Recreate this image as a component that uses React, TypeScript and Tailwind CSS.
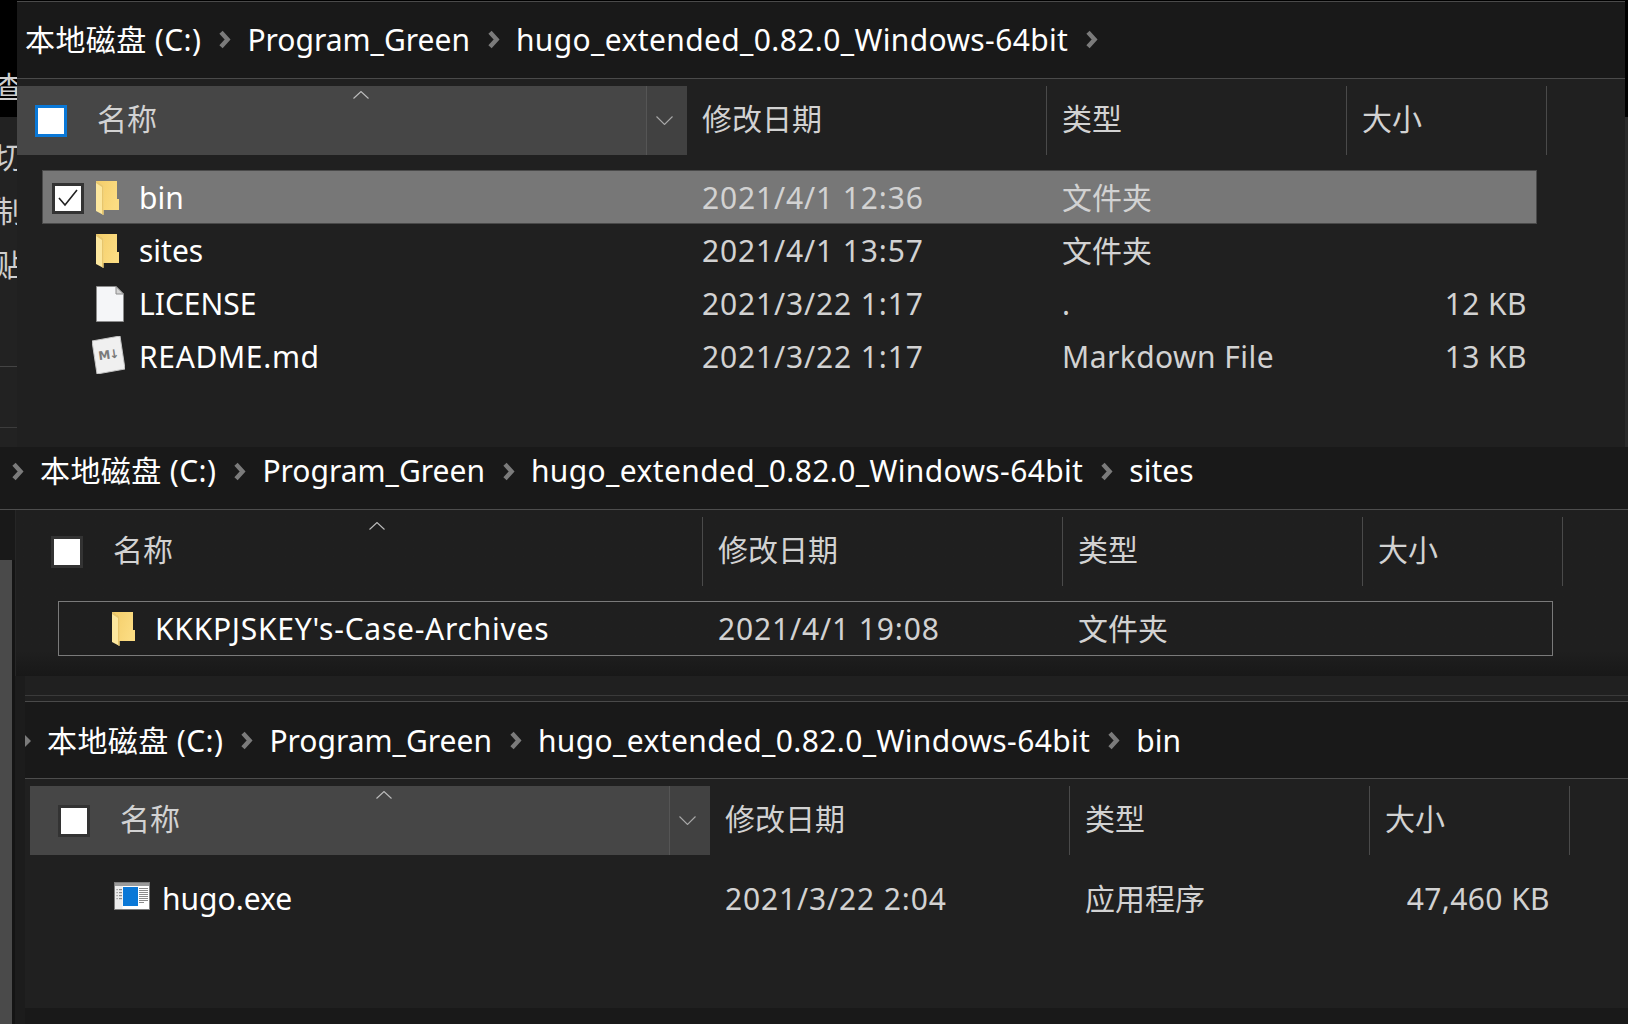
const Chevron = () => (
  <svg width="13" height="19" viewBox="0 0 13 19" className="shrink-0 -ml-[1px] -mr-[2px]">
    <path d="M3 2.2 L9.6 9.5 L3 16.8" fill="none" stroke="#7b7b7b" strokeWidth="4.4" />
  </svg>
);

const crumbTrack = ["tracking-[0.4px]", "", "tracking-[0.37px]", ""];

const Crumbs = ({ items }: { items: string[] }) => (
  <>
    {items.map((t, i) => (
      <div key={t} className="flex items-center gap-[18px]">
        <span className={`text-white whitespace-nowrap leading-none ${crumbTrack[i]}`}>{t}</span>
        {i < items.length - 1 && <Chevron />}
      </div>
    ))}
  </>
);

const Folder = () => (
  <svg width="23" height="34" viewBox="0 0 23 34" className="shrink-0">
    <defs>
      <linearGradient id="fg" x1="0" y1="0" x2="1" y2="0.4">
        <stop offset="0" stopColor="#f4cd68" />
        <stop offset="1" stopColor="#fbdc82" />
      </linearGradient>
    </defs>
    <path d="M0 0 H21 V18 H23 V29 H7 V5 Z" fill="url(#fg)" />
    <path d="M0 0 L7.5 5 V34 L0 30 Z" fill="#fce79e" />
    <path d="M0 0 L7.5 5 V34 L6 33 V6 L0 2 Z" fill="#e8c66c" />
  </svg>
);

const Doc = () => (
  <svg width="28" height="36" viewBox="0 0 28 36" className="shrink-0">
    <path d="M.5.5 H20 L27.5 8 V35.5 H.5 Z" fill="#f5f6f8" stroke="#8c8c8c" />
    <path d="M20 .5 V8 H27.5 Z" fill="#d4d4d4" stroke="#8c8c8c" />
  </svg>
);

const Md = () => (
  <svg width="33" height="38" viewBox="0 0 33 38" className="shrink-0 -ml-[4px] -mt-[3px]">
    <path d="M0 5 L28 0 L33 33 L5 38 Z" fill="#f0f0f0" stroke="#c4c4c4" />
    <text x="6.5" y="23" fontSize="12" fontWeight="700" fill="#7a7a7a" fontFamily="'DejaVu Sans', sans-serif" transform="rotate(-8 15 20)" letterSpacing="-1">M↓</text>
  </svg>
);

const Exe = () => (
  <svg width="36" height="28" viewBox="0 0 36 28" className="shrink-0 -ml-[5px] -mt-[6px]">
    <rect x=".5" y=".5" width="35" height="27" fill="#fff" stroke="#7c7c7c" />
    <rect x="1" y="1" width="34" height="3" fill="#9a9a9a" />
    <rect x="1" y="4" width="7.5" height="23" fill="#ececec" />
    <rect x="9" y="5" width="15" height="19" fill="#0a78d7" />
    {[6, 9, 12, 15].map((y) => (
      <g key={y}>
        <rect x="2.5" y={y + 1} width="1.2" height="1.2" fill="#8a8a8a" />
        <rect x="5" y={y + 1} width="3" height="1.2" fill="#8a8a8a" />
      </g>
    ))}
    {[6, 8, 10, 12, 14, 16, 18, 20].map((y) => (
      <rect key={y} x="25" y={y} width={y === 20 ? 5 : 9} height="1" fill="#8a8a8a" />
    ))}
  </svg>
);

const Caret = () => (
  <svg width="16" height="8" viewBox="0 0 16 8" className="shrink-0">
    <path d="M.5 7.5 L8 .5 L15.5 7.5" fill="none" stroke="#bdbdbd" strokeWidth="1.1" />
  </svg>
);

const Down = () => (
  <svg width="17" height="9" viewBox="0 0 17 9">
    <path d="M.5 .5 L8.5 8.5 L16.5 .5" fill="none" stroke="#a8a8a8" strokeWidth="1.1" />
  </svg>
);

const Check = ({ focus }: { focus?: boolean }) => (
  <div className={`w-[32px] h-[32px] shrink-0 bg-white border-[3px] ${focus ? "border-[#0a78d7]" : "border-[#333333]"}`} />
);

const Header = ({ hover, focus }: { hover?: boolean; focus?: boolean }) => (
  <div className="grid grid-cols-[680px_360px_300px_200px] h-[69px] w-[1540px] text-[#d2d2d2]">
    <div className={`relative flex items-center ${hover ? "bg-[#464646]" : "border-r border-[#4a4a4a]"}`}>
      <div className="ml-[28px]"><Check focus={focus} /></div>
      <span className="ml-[30px] leading-none pb-[3px]">名称</span>
      <div className="absolute left-[346px] top-[5px]"><Caret /></div>
      {hover && (
        <div className="absolute right-0 top-0 bottom-0 w-[41px] bg-[#414141] border-l border-[#555555] flex items-center justify-center pr-[6px]">
          <Down />
        </div>
      )}
    </div>
    <div className="flex items-center pl-[15px] border-r border-[#4a4a4a]"><span className="leading-none pb-[3px]">修改日期</span></div>
    <div className="flex items-center pl-[15px] border-r border-[#4a4a4a]"><span className="leading-none pb-[3px]">类型</span></div>
    <div className="flex items-center pl-[15px] border-r border-[#4a4a4a]"><span className="leading-none pb-[3px]">大小</span></div>
  </div>
);

type RowT = { name: string; date: string; type: string; size?: string; icon: React.ReactNode; nameTrack?: string; typeTrack?: string };

const SelBox = () => (
  <div className="w-[32px] h-[31px] bg-white border-[3px] border-[#333333] flex items-center justify-center">
    <svg width="20" height="18" viewBox="0 0 20 18">
      <path d="M1 9 L7 16 L19 1" fill="none" stroke="#222222" strokeWidth="1.6" />
    </svg>
  </div>
);

const Row = ({ r, style, selected }: { r: RowT; style: string; selected?: boolean }) => (
  <div className={`ml-[35px] w-[1495px] h-[53px] grid grid-cols-[660px_361px_300px_174px] items-center ${style}`}>
    <div className="flex items-center h-full">
      <div className="w-[54px] pl-[10px] shrink-0">{selected && <SelBox />}</div>
      <div className="w-[43px] shrink-0 flex items-center">{r.icon}</div>
      <span className={`text-white whitespace-nowrap leading-none ${r.nameTrack ?? ""}`}>{r.name}</span>
    </div>
    <span className="text-[#d2d2d2] whitespace-nowrap leading-none tracking-[0.85px]">{r.date}</span>
    <span className={`text-[#d2d2d2] whitespace-nowrap leading-none -ml-[1px] ${r.typeTrack ?? ""}`}>{r.type}</span>
    <span className="text-[#d2d2d2] whitespace-nowrap text-right pr-[10px] leading-none tracking-[0.4px]">{r.size}</span>
  </div>
);

const base = ["本地磁盘 (C:)", "Program_Green", "hugo_extended_0.82.0_Windows-64bit"];

export default function App() {
  return (
    <div
      className="w-[1628px] h-[1024px] overflow-hidden flex flex-col bg-[#191919] text-[30px]"
      style={{ fontFamily: '"Noto Sans", "Noto Sans CJK SC", sans-serif' }}
    >
      {/* Panel 1 */}
      <div className="flex h-[447px] shrink-0">
        <div className="w-[17px] shrink-0 overflow-hidden flex flex-col text-[#cfcfcf]">
          <div className="h-[117px] bg-black flex flex-col items-end pt-[72px]">
            <span className="leading-[30px] -mr-[7px] whitespace-nowrap">查</span>
          </div>
          <div className="flex-1 bg-[#222222] flex flex-col items-end pt-[25px] gap-[24px]">
            <span className="leading-[30px] -mr-[7px]">切</span>
            <span className="leading-[30px] -mr-[7px]">制</span>
            <span className="leading-[30px] -mr-[7px]">贴</span>
            <div className="w-full h-[87px] -mt-[24px] border-b border-[#444444]" />
            <div className="w-full h-[61px] -mt-[24px] border-b border-[#3c3c3c]" />
          </div>
        </div>
        <div className="flex-1 min-w-0 overflow-hidden flex flex-col bg-[#202020]">
          <div className="h-[79px] shrink-0 pt-[1px] bg-black">
            <div className="h-[78px] bg-[#191919] border-t border-[#4a4a4a] border-b flex items-center pl-[8px] gap-[18px] pb-[1px]">
              <Crumbs items={base} />
              <Chevron />
            </div>
          </div>
          <div className="-ml-[10px] mt-[7px]">
            <Header hover focus />
            <div className="mt-[15px]">
              <Row selected style="bg-[#777777] h-[54px] shadow-[inset_0_0_0_1px_#4a4a4a] pt-[2px]" r={{ name: "bin", date: "2021/4/1 12:36", type: "文件夹", icon: <Folder /> }} />
              <Row style="" r={{ name: "sites", date: "2021/4/1 13:57", type: "文件夹", icon: <Folder /> }} />
              <Row style="" r={{ name: "LICENSE", date: "2021/3/22 1:17", type: ".", size: "12 KB", icon: <Doc /> }} />
              <Row style="" r={{ name: "README.md", date: "2021/3/22 1:17", type: "Markdown File", size: "13 KB", nameTrack: "tracking-[0.65px]", typeTrack: "tracking-[0.44px]", icon: <Md /> }} />
            </div>
          </div>
        </div>
        <div className="w-[3px] shrink-0 flex flex-col">
          <div className="h-[117px] bg-black" />
          <div className="flex-1 bg-[#2a2a2a]" />
        </div>
      </div>

      {/* Panel 2 */}
      <div className="shrink-0 h-[229px] flex flex-col bg-[#191919]">
        <div className="h-[63px] shrink-0 border-b border-[#4d4d4d] flex items-center pl-[12px] gap-[18px] pb-[14px]">
          <Chevron />
          <Crumbs items={[...base, "sites"]} />
        </div>
        <div className="flex-1 flex min-h-0">
          <div className="w-[15px] shrink-0 flex flex-col">
            <div className="h-[50px]" />
            <div className="flex-1 flex">
              <div className="w-[12px] bg-[#4a4a4a]" />
              <div className="w-[3px] bg-[#141414]" />
            </div>
          </div>
          <div className="flex-1 min-w-0 overflow-hidden pl-[8px] pt-[7px] border-l border-[#262626] bg-gradient-to-b from-[#1f1f1f] via-[#1f1f1f] via-[85%] to-[#181818]">
            <div className="-ml-[1px]">
              <Header />
              <div className="mt-[15px]">
                <Row style="h-[55px] shadow-[inset_0_0_0_1px_#7a7a7a]" r={{ name: "KKKPJSKEY's-Case-Archives", date: "2021/4/1 19:08", type: "文件夹", nameTrack: "tracking-[0.75px]", icon: <Folder /> }} />
              </div>
            </div>
          </div>
        </div>
      </div>

      {/* Panel 3 */}
      <div className="flex h-[348px] shrink-0">
        <div className="w-[25px] shrink-0 flex">
          <div className="w-[12px] bg-[#4a4a4a]" />
          <div className="w-[3px] bg-[#141414]" />
          <div className="w-[10px] bg-[#1c1c1c]" />
        </div>
        <div className="flex-1 min-w-0 overflow-hidden">
          <div className="h-[332px] flex flex-col bg-[#202020] overflow-hidden">
            <div className="h-[20px] shrink-0 border-b border-[#3a3a3a]" />
            <div className="h-[6px] shrink-0 border-b border-[#4a4a4a]" />
            <div className="h-[77px] shrink-0 bg-[#191919] border-b border-[#4d4d4d] flex items-center pt-[1px]">
              <svg width="6" height="12" viewBox="0 0 6 12" className="shrink-0"><path d="M0 0 L6 6 L0 12 Z" fill="#7b7b7b" /></svg>
              <div className="ml-[16px] flex items-center gap-[18px]"><Crumbs items={[...base, "bin"]} /></div>
            </div>
            <div className="pl-[5px] pt-[7px]">
              <Header hover />
              <div className="mt-[17px]">
                <Row style="" r={{ name: "hugo.exe", date: "2021/3/22 2:04", type: "应用程序", size: "47,460 KB", icon: <Exe /> }} />
              </div>
            </div>
          </div>
        </div>
      </div>
    </div>
  );
}
